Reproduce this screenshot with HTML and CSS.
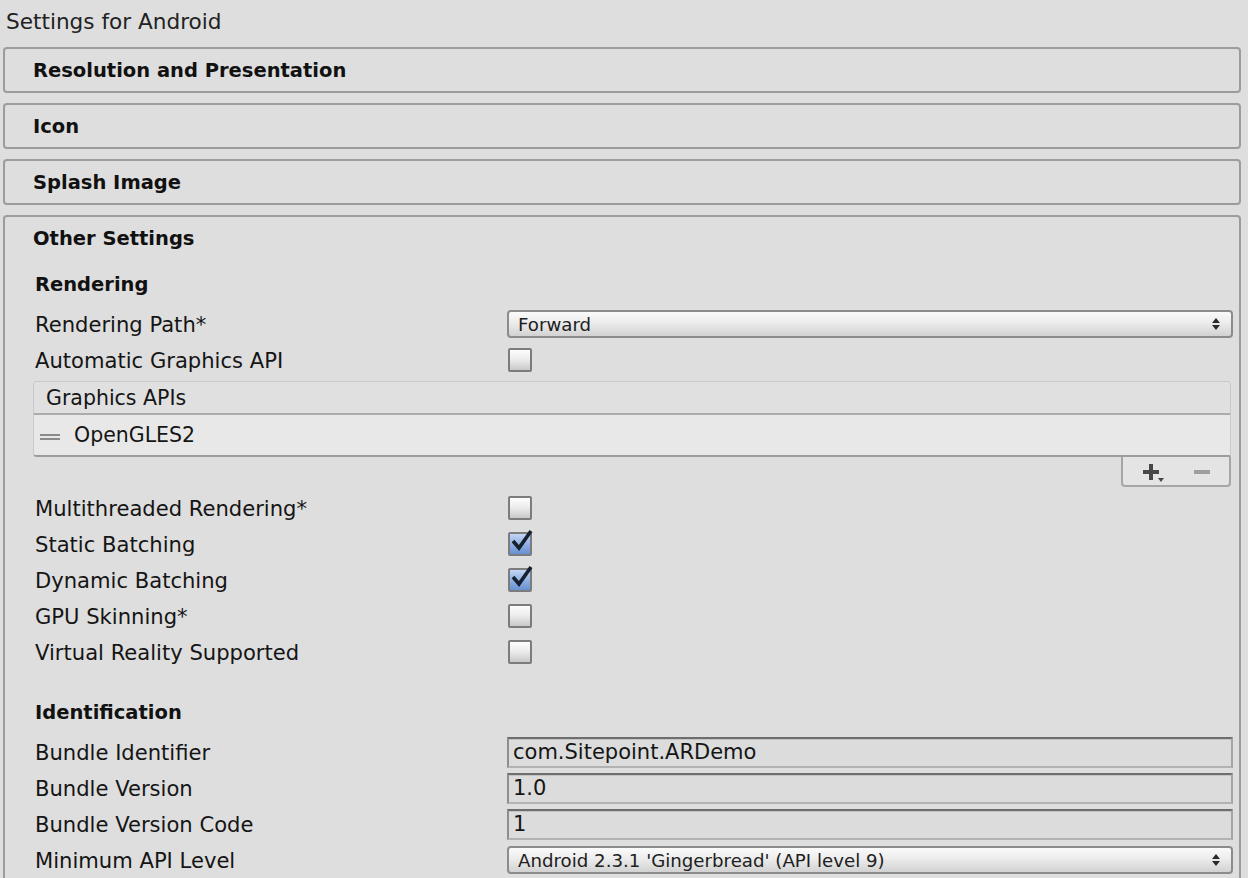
FILE: index.html
```html
<!DOCTYPE html>
<html>
<head>
<meta charset="utf-8">
<title>Settings for Android</title>
<link rel="stylesheet" href="styles.css">
</head>
<body>
<div class="title">Settings for Android</div>

<div class="panel"><div class="panel-head">Resolution and Presentation</div></div>
<div class="panel"><div class="panel-head">Icon</div></div>
<div class="panel"><div class="panel-head">Splash Image</div></div>

<div class="panel open">
  <div class="panel-head">Other Settings</div>
  <div class="panel-body">
    <div class="subhead">Rendering</div>

    <div class="row">
      <div class="label">Rendering Path*</div>
      <div class="ctl">
        <div class="dropdown">
          <span>Forward</span>
          <svg class="updown" width="10" height="14" viewBox="0 0 10 14"><path d="M5 1 L9 6 L1 6 Z M1 8 L9 8 L5 13 Z" fill="#2a2a2a"/></svg>
        </div>
      </div>
    </div>

    <div class="row">
      <div class="label">Automatic Graphics API</div>
      <div class="ctl"><span class="check"></span></div>
    </div>

    <div class="list">
      <div class="list-head">Graphics APIs</div>
      <div class="list-item"><span class="handle"></span><span>OpenGLES2</span></div>
    </div>
    <div class="list-foot-wrap">
      <div class="list-foot">
        <svg class="plus" width="22" height="20" viewBox="0 0 22 20"><path d="M6 0 H10 V6 H16 V10 H10 V16 H6 V10 H0 V6 H6 Z" fill="#474747"/><path d="M15 14 H21 L18 18 Z" fill="#474747"/></svg>
        <span class="minus"></span>
      </div>
    </div>

    <div class="row">
      <div class="label">Multithreaded Rendering*</div>
      <div class="ctl"><span class="check"></span></div>
    </div>
    <div class="row">
      <div class="label">Static Batching</div>
      <div class="ctl"><span class="check on"><svg width="28" height="28" viewBox="0 0 28 28"><path d="M5 13 L11 20 L23 3" fill="none" stroke="#17202e" stroke-width="3.6" stroke-linejoin="miter"/></svg></span></div>
    </div>
    <div class="row">
      <div class="label">Dynamic Batching</div>
      <div class="ctl"><span class="check on"><svg width="28" height="28" viewBox="0 0 28 28"><path d="M5 13 L11 20 L23 3" fill="none" stroke="#17202e" stroke-width="3.6" stroke-linejoin="miter"/></svg></span></div>
    </div>
    <div class="row">
      <div class="label">GPU Skinning*</div>
      <div class="ctl"><span class="check"></span></div>
    </div>
    <div class="row">
      <div class="label">Virtual Reality Supported</div>
      <div class="ctl"><span class="check"></span></div>
    </div>

    <div class="subhead spaced">Identification</div>

    <div class="row">
      <div class="label">Bundle Identifier</div>
      <div class="ctl"><div class="field">com.Sitepoint.ARDemo</div></div>
    </div>
    <div class="row">
      <div class="label">Bundle Version</div>
      <div class="ctl"><div class="field">1.0</div></div>
    </div>
    <div class="row">
      <div class="label">Bundle Version Code</div>
      <div class="ctl"><div class="field">1</div></div>
    </div>
    <div class="row">
      <div class="label">Minimum API Level</div>
      <div class="ctl">
        <div class="dropdown">
          <span>Android 2.3.1 'Gingerbread' (API level 9)</span>
          <svg class="updown" width="10" height="14" viewBox="0 0 10 14"><path d="M5 1 L9 6 L1 6 Z M1 8 L9 8 L5 13 Z" fill="#2a2a2a"/></svg>
        </div>
      </div>
    </div>
  </div>
</div>
</body>
</html>
```

FILE: styles.css
```css
html, body {
  margin: 0;
  padding: 0;
  background: #dedede;
  overflow: hidden;
  height: 878px;
}

body {
  font-family: "DejaVu Sans", "Liberation Sans", sans-serif;
  color: #151515;
  font-size: 20px;
}

.title {
  font-size: 21.6px;
  line-height: 44px;
  padding-left: 6px;
  margin-bottom: 3px;
  color: #222;
}

.panel {
  margin: 0 7px 10px 3px;
  border: 2px solid #9c9c9c;
  border-radius: 4px;
}

.panel.open {
  border-bottom: none;
  border-bottom-left-radius: 0;
  border-bottom-right-radius: 0;
  margin-bottom: 0;
}

.panel-head {
  height: 42px;
  display: flex;
  align-items: center;
  padding-left: 28px;
  font-weight: bold;
  font-size: 19.5px;
  color: #111;
}

.panel-body {
  padding: 7px 6px 0 30px;
}

.subhead {
  height: 36px;
  margin-bottom: 4px;
  display: flex;
  align-items: center;
  font-weight: bold;
  font-size: 19.5px;
  color: #111;
}

.subhead.spaced {
  margin-top: 24px;
}

.row {
  height: 36px;
  display: flex;
  align-items: center;
}

.label {
  width: 472px;
  flex: none;
  white-space: nowrap;
  font-size: 21.1px;
  color: #151515;
}

.ctl {
  flex: 1;
  display: flex;
  align-items: center;
}

.dropdown {
  flex: 1;
  height: 24px;
  border: 2px solid #8c8c8c;
  border-radius: 4px;
  background: linear-gradient(#fbfbfb, #ececec 45%, #d2d2d2);
  display: flex;
  align-items: center;
  justify-content: space-between;
  padding: 0 10px 0 9px;
  font-size: 18.2px;
  color: #202020;
}

.updown {
  display: block;
}

.check {
  position: relative;
  margin-left: 1px;
  width: 20px;
  height: 20px;
  border: 2px solid #7c7c7c;
  border-radius: 2px;
  background: linear-gradient(#fdfdfd, #ebebeb 50%, #c9c9c9);
  flex: none;
}

.check.on {
  background: linear-gradient(#c3d5f3, #92b1e4 50%, #6790d2);
}

.check svg {
  position: absolute;
  left: -2px;
  top: -6px;
}

.list {
  margin: 3px 2px 0 -2px;
  border: 1px solid #c9c9c9;
  border-bottom: 2px solid #9c9c9c;
  border-radius: 4px 4px 0 4px;
  overflow: hidden;
}

.list-head {
  height: 31px;
  background: #e0e0e0;
  border-bottom: 2px solid #ababab;
  display: flex;
  align-items: center;
  padding-left: 12px;
  font-size: 20.5px;
  color: #151515;
}

.list-item {
  height: 40px;
  background: #e8e8e8;
  display: flex;
  align-items: center;
  padding-left: 6px;
  font-size: 20.5px;
  color: #151515;
}

.handle {
  width: 20px;
  height: 6px;
  border-top: 2px solid #8a8a8a;
  border-bottom: 2px solid #8a8a8a;
  margin: 4px 14px 0 0;
  box-sizing: border-box;
}

.list-foot-wrap {
  display: flex;
  justify-content: flex-end;
  margin-right: 2px;
}

.list-foot {
  width: 86px;
  height: 28px;
  background: #e4e4e4;
  border: 2px solid #a6a6a6;
  border-top: none;
  border-radius: 0 0 4px 4px;
  display: flex;
  align-items: center;
  padding-left: 20px;
}

.plus {
  display: block;
  margin-top: 5px;
}

.minus {
  display: block;
  width: 16px;
  height: 4px;
  background: #9e9e9e;
  margin-left: 29px;
  margin-top: 2px;
}

.list-foot-wrap + .row {
  margin-top: 3px;
}

.field {
  flex: 1;
  height: 27px;
  background: #dcdcdc;
  border-top: 2px solid #6e6e6e;
  border-left: 2px solid #8e8e8e;
  border-right: 2px solid #a4a4a4;
  border-bottom: 2px solid #b2b2b2;
  box-shadow: inset 0 1px 0 #c4c4c4;
  display: flex;
  align-items: center;
  padding-left: 4px;
  font-size: 21px;
  color: #151515;
}
```
